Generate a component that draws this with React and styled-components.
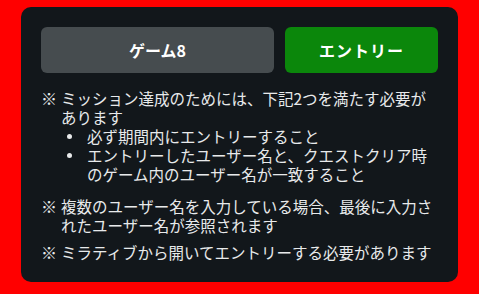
import React from "react";
import styled, { createGlobalStyle } from "styled-components";

const Global = createGlobalStyle`
  html, body { margin: 0; padding: 0; background: #ff0000; }
  body { font-family: "Noto Sans CJK JP", "Noto Sans", sans-serif; }
`;

const Page = styled.div`
  padding: 7px 21px 11px;
`;

const Card = styled.div`
  background: #12171b;
  border-radius: 10px;
  padding: 20px 20px 20px;
`;

const ButtonRow = styled.div`
  display: grid;
  grid-template-columns: 233px 1fr;
  gap: 11px;
`;

const Button = styled.button`
  height: 46px;
  border: none;
  border-radius: 6px;
  background: ${(p) => (p.$primary ? "#0b870b" : "#464c4f")};
  color: #ffffff;
  font-family: "Noto Sans CJK JP", "Noto Sans", sans-serif;
  font-weight: 700;
  font-size: 16px;
  letter-spacing: ${(p) => (p.$primary ? "1px" : "0")};
  padding: 0;
`;

const Notes = styled.div`
  margin-top: 16px;
  display: flex;
  flex-direction: column;
  gap: 8px;
  color: #e8eaeb;
  font-size: 15.5px;
  line-height: 19px;
`;

const Note = styled.div`
  display: flex;
`;

const Mark = styled.span`
  flex: 0 0 20px;
  font-size: 16px;
  line-height: 19px;
`;

const NoteText = styled.div`
  flex: 1;
`;

const List = styled.ul`
  list-style: none;
  margin: 0 0 5px;
  padding: 0;
`;

const Item = styled.li`
  position: relative;
  padding-left: 26px;
  &::before {
    content: "";
    position: absolute;
    left: 6px;
    top: 7px;
    width: 5px;
    height: 5px;
    border-radius: 50%;
    background: #e8eaeb;
  }
`;

export default function App() {
  return (
    <>
      <Global />
      <Page>
        <Card>
          <ButtonRow>
            <Button>ゲーム8</Button>
            <Button $primary>エントリー</Button>
          </ButtonRow>
          <Notes>
            <Note>
              <Mark>※</Mark>
              <NoteText>
                ミッション達成のためには、下記2つを満たす必要があります
                <List>
                  <Item>必ず期間内にエントリーすること</Item>
                  <Item>エントリーしたユーザー名と、クエストクリア時のゲーム内のユーザー名が一致すること</Item>
                </List>
              </NoteText>
            </Note>
            <Note>
              <Mark>※</Mark>
              <NoteText>複数のユーザー名を入力している場合、最後に入力されたユーザー名が参照されます</NoteText>
            </Note>
            <Note>
              <Mark>※</Mark>
              <NoteText>ミラティブから開いてエントリーする必要があります</NoteText>
            </Note>
          </Notes>
        </Card>
      </Page>
    </>
  );
}
